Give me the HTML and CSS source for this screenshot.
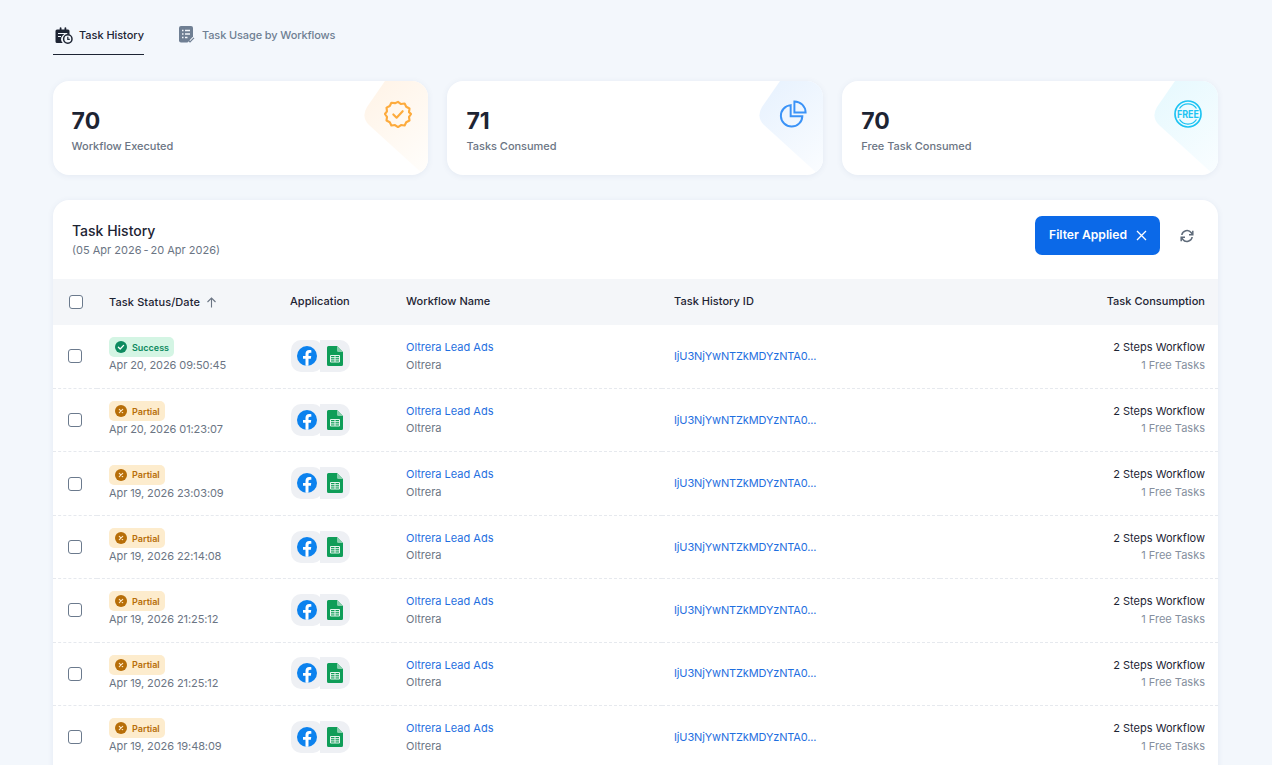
FILE: index.html
```html
<!DOCTYPE html>
<html lang="en">
<head>
  <meta charset="UTF-8" />
  <meta name="viewport" content="width=device-width, initial-scale=1.0"/>
  <title>Task History</title>
  <link rel="stylesheet" href="styles.css">
</head>
<body>
  <svg class="sprites" width="0" height="0">
    <symbol id="fb" viewBox="0 0 24 24">
      <circle cx="12" cy="12" r="12" fill="#0c82ee"/>
      <path fill="#fff" d="M16.6 15.4l.5-3.4h-3.3V9.800c0-.9.5-1.800 1.900-1.800h1.500V5.100s-1.300-.2-2.600-.2c-2.700 0-4.400 1.600-4.400 4.500V12h-3v3.400h3v8.400c.6.100 1.200.2 1.800.2s1.200-.1 1.800-.2v-8.400z"/>
    </symbol>
    <symbol id="sheet" viewBox="0 0 16 20">
      <path fill="#0f9d58" d="M1.500 0H10l6 6v12.500a1.500 1.500 0 0 1-1.500 1.500h-13A1.500 1.500 0 0 1 0 18.500v-17A1.500 1.500 0 0 1 1.500 0z"/>
      <path fill="#87ceac" d="M10 0l6 6h-4.500A1.500 1.500 0 0 1 10 4.500z"/>
      <path fill="none" stroke="#e8f5ee" stroke-width="1" d="M3.500 9.500h9v6.500h-9zM3.500 11.700h9M3.500 13.900h9M8 9.500v6.500"/>
    </symbol>
    <symbol id="ok" viewBox="0 0 12 12">
      <circle cx="6" cy="6" r="6" fill="#0d8a5f"/>
      <path fill="none" stroke="#fff" stroke-width="1.300" stroke-linecap="round" stroke-linejoin="round" d="M3.400 6.200l1.800 1.800 3.400-3.600"/>
    </symbol>
    <symbol id="part" viewBox="0 0 12 12">
      <circle cx="6" cy="6" r="6" fill="#b76e08"/>
      <path fill="none" stroke="#fde9c8" stroke-width="1.100" stroke-linecap="round" d="M4.300 4.300l3.400 3.400M7.700 4.300l-3.400 3.400"/>
    </symbol>
  </svg>

  <nav class="tabs">
    <a class="tab tab-active">
      <svg width="18" height="18" viewBox="0 0 18 18"><path fill="#1d2433" d="M2 3.500h2.700V2.200a.9.900 0 0 1 1.800 0v1.300h3V2.200a.9.900 0 0 1 1.800 0v1.300H13A1.500 1.500 0 0 1 14.500 5v3.500a5.500 5.500 0 0 0-6.800 8.500H2a1.500 1.500 0 0 1-1.500-1.500V5A1.500 1.500 0 0 1 2 3.500z"/><path stroke="#f3f7fc" stroke-width="1.200" d="M3 7.500h9M3 10.500h3"/><circle cx="12.800" cy="13" r="4.200" fill="none" stroke="#1d2433" stroke-width="1.500"/><path fill="none" stroke="#1d2433" stroke-width="1.200" d="M12.800 10.700v2.600h2"/></svg>
      Task History
    </a>
    <a class="tab tab-usage">
      <svg width="16" height="17" viewBox="0 0 16 17"><path fill="#6f7f93" d="M2 0h10a2 2 0 0 1 2 2v8.500l-5.500 6H2a2 2 0 0 1-2-2V2a2 2 0 0 1 2-2z"/><path stroke="#f3f7fc" stroke-width="1.300" d="M3 4.500h1.500M6 4.500h5M3 8h1.500M6 8h5M3 11.500h1.500M6 11.500h2.500"/><path fill="none" stroke="#6f7f93" stroke-width="1.200" d="M9 14l2 1.800 4-4"/></svg>
      Task Usage by Workflows
    </a>
  </nav>

  <section class="stats">
    <div class="stat">
      <svg class="stat-shape" width="64" height="94" viewBox="0 0 64 94"><defs><linearGradient id="g1" x1="0.2" y1="0" x2="0.8" y2="1"><stop offset="0" stop-color="#fff4e8"/><stop offset="1" stop-color="#fffdfa"/></linearGradient></defs><path fill="url(#g1)" d="M21 0H64V94H60L5 44Q-3 36 3 26z"/></svg>
      <svg class="stat-icon" width="28" height="28" viewBox="0 0 30 30" fill="none" stroke="#fdab3d" stroke-width="2.300" stroke-linejoin="round" stroke-linecap="round"><path d="M15 2l3.200 2.300 3.900-.5 1.700 3.500 3.500 1.800-.5 3.900L29 15l-2.200 3.100.5 3.900-3.500 1.800-1.700 3.500-3.900-.5L15 29l-3.200-2.200-3.900.5-1.700-3.500-3.500-1.800.5-3.900L1 15l2.200-2.900-.5-3.900 3.500-1.800 1.700-3.500 3.900.5z"/><path d="M10 15.500l3.500 3.500 6.500-7"/></svg>
      <div class="stat-num">70</div>
      <div class="stat-label">Workflow Executed</div>
    </div>
    <div class="stat">
      <svg class="stat-shape" width="64" height="94" viewBox="0 0 64 94"><defs><linearGradient id="g2" x1="0.2" y1="0" x2="0.8" y2="1"><stop offset="0" stop-color="#e8f2fe"/><stop offset="1" stop-color="#f9fcff"/></linearGradient></defs><path fill="url(#g2)" d="M21 0H64V94H60L5 44Q-3 36 3 26z"/></svg>
      <svg class="stat-icon" width="28" height="28" viewBox="0 0 30 30" fill="none" stroke="#3b93f7" stroke-width="2.100"><path d="M12.500 5.500A11.500 11.500 0 1 0 25 17.500H12.500z"/><path d="M16.500 1.500a12 12 0 0 1 12 12h-12z"/></svg>
      <div class="stat-num">71</div>
      <div class="stat-label">Tasks Consumed</div>
    </div>
    <div class="stat">
      <svg class="stat-shape" width="64" height="94" viewBox="0 0 64 94"><defs><linearGradient id="g3" x1="0.2" y1="0" x2="0.8" y2="1"><stop offset="0" stop-color="#e7f9fe"/><stop offset="1" stop-color="#f8fdff"/></linearGradient></defs><path fill="url(#g3)" d="M21 0H64V94H60L5 44Q-3 36 3 26z"/></svg>
      <svg class="stat-icon" width="28" height="28" viewBox="0 0 28 28" fill="none" stroke="#1dc3f2"><circle cx="14" cy="14" r="13" stroke-width="1.700"/><path stroke-width="1.300" d="M5.500 8.500a10.200 10.200 0 0 1 17 0M5.500 19.500a10.200 10.200 0 0 0 17 0"/><text class="free-text" x="14" y="17.500" text-anchor="middle" textLength="22" lengthAdjust="spacingAndGlyphs">FREE</text></svg>
      <div class="stat-num">70</div>
      <div class="stat-label">Free Task Consumed</div>
    </div>
  </section>

  <section class="panel">
    <header class="panel-head">
      <div>
        <h2>Task History</h2>
        <p>(05 Apr 2026&#8201;-&#8201;20 Apr 2026)</p>
      </div>
      <div class="panel-actions">
        <button class="filter-btn">Filter Applied
          <svg width="11" height="11" viewBox="0 0 11 11"><path stroke="#fff" stroke-width="1.300" d="M1 1l9 9M10 1l-9 9"/></svg>
        </button>
        <svg class="refresh" width="14" height="14" viewBox="0 0 14 14" fill="none" stroke="#5f6b7a" stroke-width="1.500"><path d="M1.800 6a5.300 5.300 0 0 1 9.500-2.300L12.600 5.500M12.200 8a5.300 5.300 0 0 1-9.500 2.300L1.400 8.500"/><path d="M12.800 1.800v3.900H9M1.200 12.200V8.300H5"/></svg>
      </div>
    </header>

    <table class="tasks">
      <thead>
        <tr>
          <th class="col-check"><span class="check check-head"></span></th>
          <th class="col-status">Task Status/Date <svg class="sort" width="11" height="11" viewBox="0 0 11 11" fill="none" stroke="#6b7584" stroke-width="1.100"><path d="M5.500 10.500V1M1.500 5l4-4 4 4"/></svg></th>
          <th class="col-app">Application</th>
          <th class="col-flow">Workflow Name</th>
          <th class="col-id">Task History ID</th>
          <th class="col-use">Task Consumption</th>
        </tr>
      </thead>
      <tbody>
        <tr>
          <td><span class="check"></span></td>
          <td class="cell-status"><span class="badge badge-ok"><svg width="12" height="12"><use href="#ok"/></svg>Success</span><div class="date">Apr 20, 2026 09:50:45</div></td>
          <td><div class="apps"><span class="app"><svg width="20" height="20"><use href="#fb"/></svg></span><span class="app app-2"><svg width="16" height="20"><use href="#sheet"/></svg></span></div></td>
          <td><a class="link">Oltrera Lead Ads</a><div class="sub">Oltrera</div></td>
          <td><a class="link hist-id">IjU3NjYwNTZkMDYzNTA0...</a></td>
          <td class="col-use"><div class="steps">2 Steps Workflow</div><div class="sub sub-light">1 Free Tasks</div></td>
        </tr>
        <tr>
          <td><span class="check"></span></td>
          <td class="cell-status"><span class="badge badge-part"><svg width="12" height="12"><use href="#part"/></svg>Partial</span><div class="date">Apr 20, 2026 01:23:07</div></td>
          <td><div class="apps"><span class="app"><svg width="20" height="20"><use href="#fb"/></svg></span><span class="app app-2"><svg width="16" height="20"><use href="#sheet"/></svg></span></div></td>
          <td><a class="link">Oltrera Lead Ads</a><div class="sub">Oltrera</div></td>
          <td><a class="link hist-id">IjU3NjYwNTZkMDYzNTA0...</a></td>
          <td class="col-use"><div class="steps">2 Steps Workflow</div><div class="sub sub-light">1 Free Tasks</div></td>
        </tr>
        <tr>
          <td><span class="check"></span></td>
          <td class="cell-status"><span class="badge badge-part"><svg width="12" height="12"><use href="#part"/></svg>Partial</span><div class="date">Apr 19, 2026 23:03:09</div></td>
          <td><div class="apps"><span class="app"><svg width="20" height="20"><use href="#fb"/></svg></span><span class="app app-2"><svg width="16" height="20"><use href="#sheet"/></svg></span></div></td>
          <td><a class="link">Oltrera Lead Ads</a><div class="sub">Oltrera</div></td>
          <td><a class="link hist-id">IjU3NjYwNTZkMDYzNTA0...</a></td>
          <td class="col-use"><div class="steps">2 Steps Workflow</div><div class="sub sub-light">1 Free Tasks</div></td>
        </tr>
        <tr>
          <td><span class="check"></span></td>
          <td class="cell-status"><span class="badge badge-part"><svg width="12" height="12"><use href="#part"/></svg>Partial</span><div class="date">Apr 19, 2026 22:14:08</div></td>
          <td><div class="apps"><span class="app"><svg width="20" height="20"><use href="#fb"/></svg></span><span class="app app-2"><svg width="16" height="20"><use href="#sheet"/></svg></span></div></td>
          <td><a class="link">Oltrera Lead Ads</a><div class="sub">Oltrera</div></td>
          <td><a class="link hist-id">IjU3NjYwNTZkMDYzNTA0...</a></td>
          <td class="col-use"><div class="steps">2 Steps Workflow</div><div class="sub sub-light">1 Free Tasks</div></td>
        </tr>
        <tr>
          <td><span class="check"></span></td>
          <td class="cell-status"><span class="badge badge-part"><svg width="12" height="12"><use href="#part"/></svg>Partial</span><div class="date">Apr 19, 2026 21:25:12</div></td>
          <td><div class="apps"><span class="app"><svg width="20" height="20"><use href="#fb"/></svg></span><span class="app app-2"><svg width="16" height="20"><use href="#sheet"/></svg></span></div></td>
          <td><a class="link">Oltrera Lead Ads</a><div class="sub">Oltrera</div></td>
          <td><a class="link hist-id">IjU3NjYwNTZkMDYzNTA0...</a></td>
          <td class="col-use"><div class="steps">2 Steps Workflow</div><div class="sub sub-light">1 Free Tasks</div></td>
        </tr>
        <tr>
          <td><span class="check"></span></td>
          <td class="cell-status"><span class="badge badge-part"><svg width="12" height="12"><use href="#part"/></svg>Partial</span><div class="date">Apr 19, 2026 21:25:12</div></td>
          <td><div class="apps"><span class="app"><svg width="20" height="20"><use href="#fb"/></svg></span><span class="app app-2"><svg width="16" height="20"><use href="#sheet"/></svg></span></div></td>
          <td><a class="link">Oltrera Lead Ads</a><div class="sub">Oltrera</div></td>
          <td><a class="link hist-id">IjU3NjYwNTZkMDYzNTA0...</a></td>
          <td class="col-use"><div class="steps">2 Steps Workflow</div><div class="sub sub-light">1 Free Tasks</div></td>
        </tr>
        <tr>
          <td><span class="check"></span></td>
          <td class="cell-status"><span class="badge badge-part"><svg width="12" height="12"><use href="#part"/></svg>Partial</span><div class="date">Apr 19, 2026 19:48:09</div></td>
          <td><div class="apps"><span class="app"><svg width="20" height="20"><use href="#fb"/></svg></span><span class="app app-2"><svg width="16" height="20"><use href="#sheet"/></svg></span></div></td>
          <td><a class="link">Oltrera Lead Ads</a><div class="sub">Oltrera</div></td>
          <td><a class="link hist-id">IjU3NjYwNTZkMDYzNTA0...</a></td>
          <td class="col-use"><div class="steps">2 Steps Workflow</div><div class="sub sub-light">1 Free Tasks</div></td>
        </tr>
      </tbody>
    </table>
  </section>
</body>
</html>
```

FILE: styles.css
```css
html, body {
  height: 765px;
  overflow: hidden;
}
body {
  margin: 0;
  padding: 0 54px 0 53px;
  background-color: #f3f7fc;
  color: #1d2433;
  font-family: Inter, "Noto Sans", sans-serif;
  font-size: 11px;
}
.sprites {
  position: absolute;
}

/* tabs */
.tabs {
  display: flex;
  gap: 34px;
  height: 55px;
  padding-top: 18px;
  box-sizing: border-box;
}
.tab {
  display: flex;
  align-items: flex-start;
  gap: 7px;
  color: #6f7f93;
  font-weight: 500;
  line-height: 34px;
  height: 37px;
  box-sizing: border-box;
}
.tab svg {
  margin-top: 8px;
}
.tab-usage {
  padding-left: 1px;
  letter-spacing: -0.12px;
}
.tab-active {
  gap: 6px;
  padding-left: 2px;
  color: #1d2433;
  border-bottom: 1px solid #1d2433;
  letter-spacing: -0.05px;
}

/* stat cards */
.stats {
  display: grid;
  grid-template-columns: repeat(3, 1fr);
  gap: 19px;
  margin-top: 26px;
  margin-left: -0.4px;
}
.stat {
  position: relative;
  height: 94px;
  padding: 26px 19px 0;
  box-sizing: border-box;
  background: #fff;
  border-radius: 16px;
  box-shadow: 0 1px 6px rgba(50, 80, 130, 0.08);
  overflow: hidden;
}
.stat-shape {
  position: absolute;
  top: 0;
  right: 0;
}
.stat-icon {
  position: absolute;
  top: 19px;
  right: 16px;
}
.free-text {
  font-size: 10px;
  font-weight: 700;
  fill: #1dc3f2;
  stroke: none;
}
.stat-num {
  font-size: 23px;
  font-weight: 700;
  line-height: 28px;
}
.stat-label {
  margin-top: 4px;
  color: #6b7584;
  font-weight: 500;
  font-size: 11px;
  letter-spacing: -0.02px;
}

/* table panel */
.panel {
  margin-top: 25px;
  background: #fff;
  border-radius: 16px 16px 0 0;
  box-shadow: 0 1px 6px rgba(50, 80, 130, 0.08);
}
.panel-head {
  display: flex;
  justify-content: space-between;
  height: 79px;
  padding: 16px 19px 0;
  box-sizing: border-box;
}
.panel-head h2 {
  margin: 6px 0 0;
  font-size: 14px;
  font-weight: 500;
  line-height: 18px;
}
.panel-head p {
  margin: 3px 0 0;
  color: #6b7584;
  font-size: 11px;
}
.panel-actions {
  display: flex;
  align-items: flex-start;
  gap: 20px;
  margin-right: 5px;
}
.filter-btn {
  display: flex;
  align-items: center;
  gap: 9px;
  height: 39px;
  padding: 0 13px 2px 14px;
  border: none;
  border-radius: 7px;
  background: #0b69e8;
  color: #fff;
  font-family: inherit;
  font-size: 12.150px;
  font-weight: 600;
}
.filter-btn svg {
  margin-top: 2px;
}
.refresh {
  margin-top: 13px;
}

.tasks {
  width: 100%;
  border-collapse: collapse;
  table-layout: fixed;
}
.tasks th {
  height: 46px;
  padding: 0 13px 2px 12px;
  box-sizing: border-box;
  background: #f4f6f9;
  font-size: 11px;
  font-weight: 500;
  text-align: left;
  letter-spacing: 0.03px;
}
.tasks td {
  height: 63.450px;
  padding: 0 13px 1px 12px;
  box-sizing: border-box;
  border-bottom: 1px dashed #e6e9ee;
  color: #6b7584;
}
.tasks .cell-status {
  padding-bottom: 3px;
}
.tasks th:first-child, .tasks td:first-child {
  padding: 0 0 0 15px;
}
.tasks th.col-status {
  padding-bottom: 0;
  letter-spacing: 0.1px;
}
.col-check { width: 44px; }
.col-status { width: 181px; }
.col-app { width: 116px; }
.col-flow { width: 268px; }
.tasks .col-use {
  text-align: right;
}
.sort {
  margin-left: 3px;
  vertical-align: -2px;
}
.check {
  display: block;
  width: 12px;
  height: 12px;
  border: 1px solid #6b7a8d;
  border-radius: 3px;
  background: #fff;
}
.check-head {
  margin-left: 1px;
}
.badge {
  display: inline-flex;
  align-items: center;
  gap: 5px;
  height: 20px;
  padding: 0 5px 0 6px;
  border-radius: 5px;
  font-size: 9px;
  font-weight: 600;
}
.badge-ok {
  background: #d4f5e4;
  color: #0d8a5f;
}
.badge-part {
  background: #fdeccd;
  color: #b76e08;
}
.date {
  margin-top: 1px;
  font-size: 11px;
  letter-spacing: -0.09px;
}
.apps {
  display: flex;
}
.app {
  position: relative;
  z-index: 1;
  display: flex;
  align-items: center;
  justify-content: center;
  width: 32px;
  height: 32px;
  margin-left: 1px;
  border-radius: 10px;
  background: #eef0f4;
}
.app-2 {
  z-index: 0;
  width: 30px;
  margin-left: -3px;
  border-radius: 0 10px 10px 0;
  box-shadow: -1px 0 0 #fff;
}
.link {
  color: #1f6fe0;
  font-size: 11px;
}
.hist-id {
  letter-spacing: -0.14px;
}
.sub {
  margin-top: 3.600px;
  font-size: 11px;
}
.sub-light {
  color: #858f9e;
}
.steps {
  color: #1d2433;
}
```
